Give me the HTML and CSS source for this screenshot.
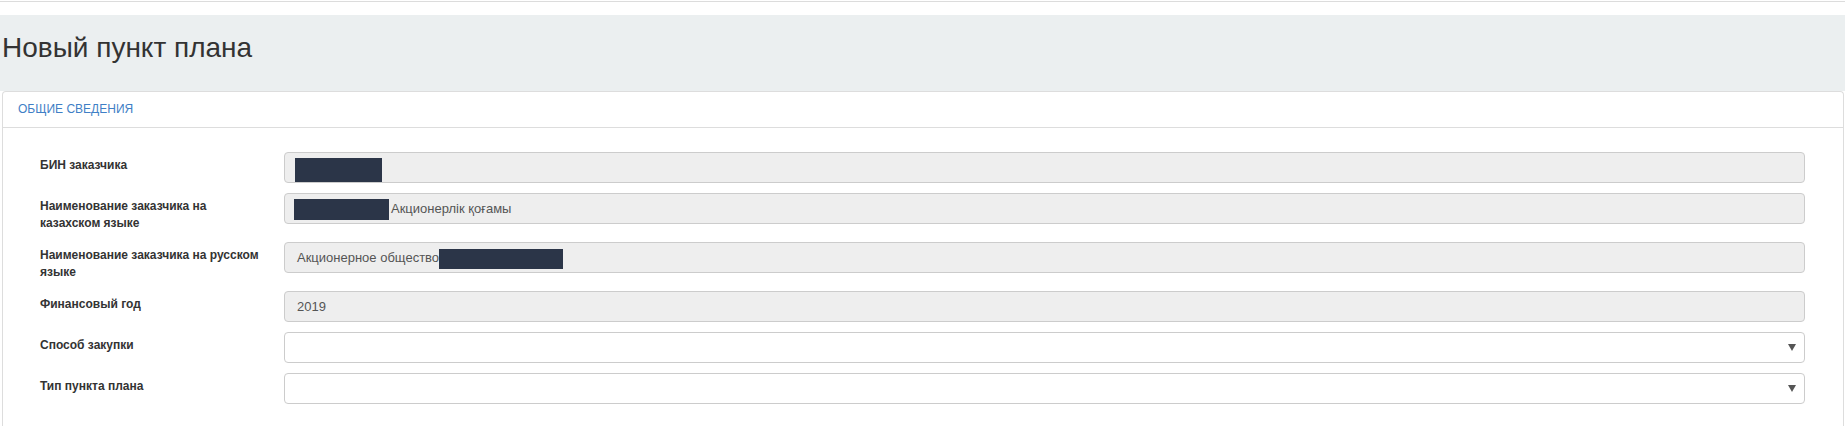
FILE: index.html
```html
<!DOCTYPE html>
<html lang="ru">
<head>
    <meta charset="UTF-8">
    <meta name="viewport" content="width=device-width, initial-scale=1.0">
    <title>Новый пункт плана</title>
    <link rel="stylesheet" href="styles.css">
</head>
<body>
    <div class="topbar"></div>

    <div class="page-header">
        <h1>Новый пункт плана</h1>
    </div>

    <!-- Общие сведения -->
    <div class="panel">
        <div class="panel-heading">ОБЩИЕ СВЕДЕНИЯ</div>
        <div class="panel-body">
            <div class="form-group">
                <label class="control-label">БИН заказчика</label>
                <div class="form-control disabled"><span class="redact redact-bin"></span></div>
            </div>
            <div class="form-group">
                <label class="control-label">Наименование заказчика на казахском языке</label>
                <div class="form-control disabled"><span class="redact redact-kz"></span>Акционерлік қоғамы</div>
            </div>
            <div class="form-group">
                <label class="control-label">Наименование заказчика на русском языке</label>
                <div class="form-control disabled">Акционерное общество<span class="redact redact-ru"></span></div>
            </div>
            <div class="form-group">
                <label class="control-label">Финансовый год</label>
                <div class="form-control disabled">2019</div>
            </div>
            <div class="form-group">
                <label class="control-label">Способ закупки</label>
                <div class="form-control select"><span class="caret"></span></div>
            </div>
            <div class="form-group">
                <label class="control-label">Тип пункта плана</label>
                <div class="form-control select"><span class="caret"></span></div>
            </div>
        </div>
    </div>
</body>
</html>
```

FILE: styles.css
```css
html, body {
    margin: 0;
    padding: 0;
    overflow: hidden;
}
body {
    background: #fff;
    color: #333;
    font-family: "Liberation Sans", Arial, sans-serif;
    font-size: 13px;
}
.topbar {
    height: 1px;
    border-bottom: 1px solid #dcdcdc;
}
.page-header {
    box-sizing: border-box;
    height: 76px;
    margin-top: 13px;
    padding: 17px 0 0 2px;
    background: #ebeff0;
}
.page-header h1 {
    margin: 0;
    font-size: 28px;
    font-weight: normal;
    line-height: 32px;
    color: #333;
}
.panel {
    margin: 0 1px 0 2px;
    border: 1px solid #ddd;
    border-bottom: none;
    border-radius: 4px 4px 0 0;
    background: #fff;
}
.panel-heading {
    height: 35px;
    line-height: 35px;
    padding: 0 15px;
    border-bottom: 1px solid #ddd;
    color: #3f7fc6;
    font-size: 12px;
}
.panel-body {
    padding: 24px 38px 20px 37px;
}
.form-group {
    display: grid;
    grid-template-columns: 244px 1fr;
    align-items: start;
    margin-bottom: 10px;
}
.control-label {
    box-sizing: border-box;
    padding: 5px 16px 0 0;
    font-size: 12px;
    font-weight: bold;
    line-height: 17px;
    color: #333;
}
.form-control {
    box-sizing: border-box;
    height: 31px;
    padding: 0 12px;
    border: 1px solid #ccc;
    border-radius: 4px;
    background: #fff;
    color: #555;
    font-size: 13px;
    line-height: 29px;
    white-space: nowrap;
}
.form-control.disabled {
    background: #eee;
}
.form-control.select {
    display: flex;
    align-items: center;
    justify-content: flex-end;
    padding-right: 8px;
}
.caret {
    width: 0;
    height: 0;
    border-left: 4px solid transparent;
    border-right: 4px solid transparent;
    border-top: 7px solid #555;
}
.redact {
    display: inline-block;
    vertical-align: middle;
    background: #2b3548;
}
.redact-bin {
    width: 87px;
    height: 24px;
    margin: 2px 0 0 -2px;
}
.redact-kz {
    width: 95px;
    height: 21px;
    margin: 0 2px 0 -3px;
}
.redact-ru {
    width: 124px;
    height: 20px;
}
```
